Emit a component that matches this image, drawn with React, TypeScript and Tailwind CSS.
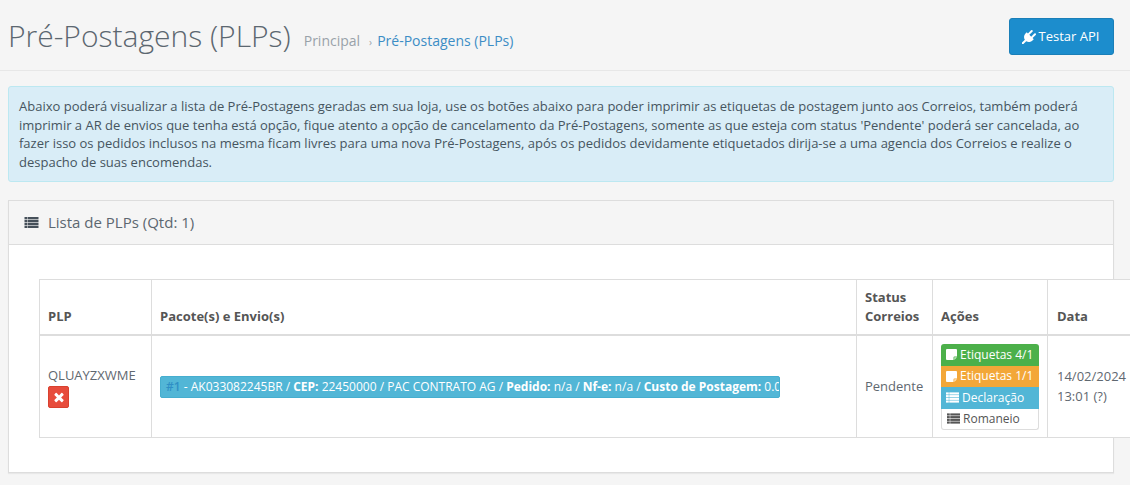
const FONT = "font-['Open_Sans',sans-serif]";

/** Stacked list glyph used by the panel heading and the action buttons. */
function ListIcon({ className }: { className?: string }) {
  return (
    <svg viewBox="0 0 14 11" className={className} fill="currentColor" aria-hidden="true">
      <rect x="0" y="0" width="3" height="2.3" />
      <rect x="0" y="2.9" width="3" height="2.3" />
      <rect x="0" y="5.8" width="3" height="2.3" />
      <rect x="0" y="8.7" width="3" height="2.3" />
      <rect x="3.5" y="0" width="10.5" height="2.3" />
      <rect x="3.5" y="2.9" width="10.5" height="2.3" />
      <rect x="3.5" y="5.8" width="10.5" height="2.3" />
      <rect x="3.5" y="8.7" width="10.5" height="2.3" />
    </svg>
  );
}

function NoteIcon({ className }: { className?: string }) {
  return (
    <svg viewBox="0 0 11 11" className={className} fill="currentColor" aria-hidden="true">
      <path d="M1 0h9a1 1 0 0 1 1 1v6.5h-2.5a1 1 0 0 0-1 1V11H1a1 1 0 0 1-1-1V1a1 1 0 0 1 1-1z" />
      <path d="M8.3 8.3H11L8.3 11z" opacity="0.7" />
    </svg>
  );
}

function PlugIcon({ className }: { className?: string }) {
  return (
    <svg viewBox="0 0 1792 1792" className={className} fill="currentColor" aria-hidden="true">
      <path d="M1755 453q37 38 37 90.5t-37 90.5l-401 400 150 150-160 160q-163 163-389.5 186.5t-411.5-100.5l-362 362h-181v-181l362-362q-124-185-100.5-411.5t186.5-389.5l160-160 150 150 400-401q38-37 91-37t90 37 37 90.5-37 90.5l-400 401 234 234 401-400q38-37 91-37t90 37z" />
    </svg>
  );
}

function TimesIcon({ className }: { className?: string }) {
  return (
    <svg viewBox="0 0 1792 1792" className={className} fill="currentColor" aria-hidden="true">
      <path d="M1490 1322q0 40-28 68l-136 136q-28 28-68 28t-68-28l-294-294-294 294q-28 28-68 28t-68-28l-136-136q-28-28-28-68t28-68l294-294-294-294q-28-28-28-68t28-68l136-136q28-28 68-28t68 28l294 294 294-294q28-28 68-28t68 28l136 136q28 28 28 68t-28 68l-294 294 294 294q28 28 28 68z" />
    </svg>
  );
}

function PageHeader() {
  return (
    <header className="h-[71px] flex items-start justify-between border-b border-[#e7e7e7] pl-2 pr-4">
      <div className="flex items-baseline pt-[15px]">
        <h1 className="text-[30px] leading-[42px] font-light text-[#5c6770]">Pré-Postagens (PLPs)</h1>
        <nav className="flex items-baseline ml-[13px] text-[14px] -translate-y-px">
          <span className="text-[#99a2a9]">Principal</span>
          <span className="text-[#99a2a9] text-[10px] ml-[9px] mr-[5px]">›</span>
          <span className="text-[#3c8dc5]">Pré-Postagens (PLPs)</span>
        </nav>
      </div>
      <button className="mt-[18px] h-[37px] w-[105px] flex items-center justify-center gap-[3px] pr-[2px] rounded-[3px] bg-[#1c8dcd] border border-[#1a7fb8] text-white text-[13px]">
        <PlugIcon className="w-[14px] h-[14px]" />
        Testar API
      </button>
    </header>
  );
}

function InfoAlert() {
  return (
    <div className="mt-[15px] mx-2 mr-4 h-[96px] rounded-[3px] border border-[#bce8f1] bg-[#d9edf7] px-[10px] pt-[10px] text-[13px] leading-[18.6px] text-[#46555f]">
      Abaixo poderá visualizar a lista de Pré-Postagens geradas em sua loja, use os botões abaixo para poder imprimir as etiquetas de postagem junto aos Correios, também poderá imprimir a AR de envios que tenha está opção, fique atento a opção de cancelamento da Pré-Postagens, somente as que esteja com status 'Pendente' poderá ser cancelada, ao fazer isso os pedidos inclusos na mesma ficam livres para uma nova Pré-Postagens, após os pedidos devidamente etiquetados dirija-se a uma agencia dos Correios e realize o despacho de suas encomendas.
    </div>
  );
}

function ActionGroup() {
  const row = 'h-[21.5px] flex items-center pl-[5px] text-[12px] whitespace-nowrap';
  return (
    <div className="w-[98px] flex flex-col">
      <div className={`${row} rounded-t-[3px] bg-[#4cb04a] text-white`}>
        <NoteIcon className="w-[11px] h-[11px] mr-[3px]" />
        Etiquetas 4/1
      </div>
      <div className={`${row} bg-[#f3a738] text-white`}>
        <NoteIcon className="w-[11px] h-[11px] mr-[3px]" />
        Etiquetas 1/1
      </div>
      <div className={`${row} bg-[#52b6d6] text-white`}>
        <ListIcon className="w-[13px] h-[11px] mr-[3px]" />
        Declaração
      </div>
      <div className={`${row} rounded-b-[3px] bg-white border border-t-0 border-[#dddddd] pl-[4px] text-[#555555]`}>
        <ListIcon className="w-[13px] h-[11px] mr-[3px]" />
        Romaneio
      </div>
    </div>
  );
}

function PlpTable() {
  const th = 'border border-[#dddddd] border-b-2 px-2 pb-2 pt-2 align-bottom text-left text-[13px] leading-[19px] font-bold text-[#555555]';
  const td = 'border border-[#dddddd] p-2 align-middle text-[13px] text-[#5f6870]';
  return (
    <table className="table-fixed border-collapse w-[1108px] bg-white">
      <colgroup>
        <col className="w-[112px]" />
        <col className="w-[705px]" />
        <col className="w-[76px]" />
        <col className="w-[115px]" />
        <col className="w-[100px]" />
      </colgroup>
      <thead>
        <tr>
          <th className={th}>PLP</th>
          <th className={th}>Pacote(s) e Envio(s)</th>
          <th className={th}>Status Correios</th>
          <th className={th}>Ações</th>
          <th className={`${th} pl-[9px]`}>Data</th>
        </tr>
      </thead>
      <tbody>
        <tr>
          <td className={td}>
            <div className="leading-[19px] pb-[1px]">QLUAYZXWME</div>
            <button className="flex items-center justify-center w-[21px] h-[22px] rounded-[2px] bg-[#e74c3c] border border-[#d9412f] text-white">
              <TimesIcon className="w-[14px] h-[14px]" />
            </button>
          </td>
          <td className={td}>
            <div className="w-[620px] h-[22px] flex items-center overflow-hidden rounded-[2px] border border-[#46aecf] bg-[#52b6d6] pl-[5px] text-[12px] text-white whitespace-nowrap">
              <b className="text-[#2f8fc5] font-semibold">#1</b>
              <span className="whitespace-pre"> - AK033082245BR / </span>
              <b>CEP:</b>
              <span className="whitespace-pre"> 22450000 / PAC CONTRATO AG / </span>
              <b>Pedido:</b>
              <span className="whitespace-pre"> n/a / </span>
              <b>Nf-e:</b>
              <span className="whitespace-pre"> n/a / </span>
              <b>Custo de Postagem:</b>
              <span className="whitespace-pre"> 0.00</span>
            </div>
          </td>
          <td className={td}>Pendente</td>
          <td className={`${td} pb-[7px]`}>
            <ActionGroup />
          </td>
          <td className={`${td} pl-[9px] leading-[19.5px] whitespace-nowrap`}>
            14/02/2024
            <br />
            13:01 (?)
          </td>
        </tr>
      </tbody>
    </table>
  );
}

function PlpPanel() {
  return (
    <section className="mt-[18px] ml-2 w-[1106px] h-[273px] border border-[#dddddd] bg-white shadow-[0_1px_1px_rgba(0,0,0,0.05)]">
      <div className="h-[44px] flex items-center gap-[9px] border-b border-[#dddddd] bg-[#f5f5f5] pl-[15px] text-[15px] text-[#5c6770]">
        <ListIcon className="w-[15px] h-[11px] text-[#46505a]" />
        Lista de PLPs (Qtd: 1)
      </div>
      <div className="pt-[34px] pl-[30px]">
        <PlpTable />
      </div>
    </section>
  );
}

export default function App() {
  return (
    <div className={`${FONT} w-[1130px] h-[485px] overflow-hidden bg-[#f5f5f5]`}>
      <PageHeader />
      <InfoAlert />
      <PlpPanel />
    </div>
  );
}
